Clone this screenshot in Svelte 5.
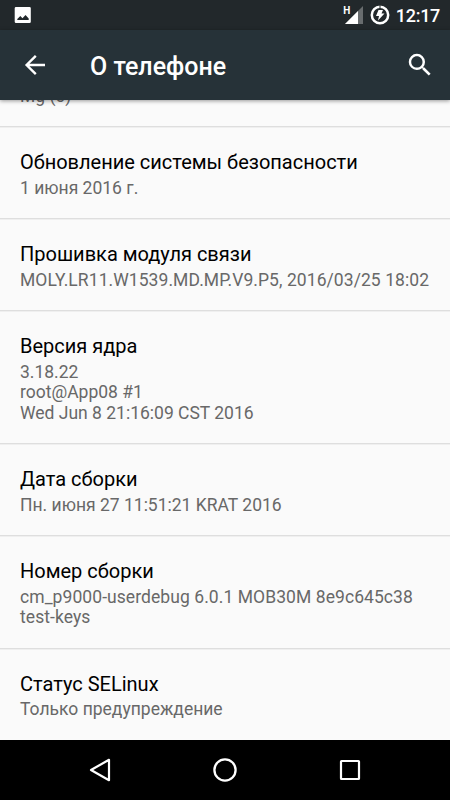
<script>
	const items = [
		{ title: 'Обновление системы безопасности', lines: ['1 июня 2016 г.'] },
		{
			title: 'Прошивка модуля связи',
			lines: ['MOLY.LR11.W1539.MD.MP.V9.P5, 2016/03/25 18:02'],
			wide: true
		},
		{
			title: 'Версия ядра',
			lines: ['3.18.22', 'root@App08 #1', 'Wed Jun 8 21:16:09 CST 2016']
		},
		{ title: 'Дата сборки', lines: ['Пн. июня 27 11:51:21 KRAT 2016'] },
		{
			title: 'Номер сборки',
			lines: ['cm_p9000-userdebug 6.0.1 MOB30M 8e9c645c38', 'test-keys'],
			wide: true
		},
		{ title: 'Статус SELinux', lines: ['Только предупреждение'] }
	];
</script>

<div class="phone">
	<div class="status-bar">
		<svg class="picture" viewBox="0 0 18 18" width="18" height="18">
			<path
				fill="#fff"
				fill-rule="evenodd"
				d="M2 1h13.500a1.300 1.300 0 0 1 1.300 1.300v13.400a1.300 1.300 0 0 1-1.300 1.300H2a1.300 1.300 0 0 1-1.300-1.300V2.300A1.300 1.300 0 0 1 2 1zM3.300 14h11.400v-1.500L11.500 9l-3 3.300L6.300 10l-3 3z"
			/>
		</svg>
		<div class="status-right">
			<span class="network">H</span>
			<svg class="signal" viewBox="0 0 18 18" width="18" height="18">
				<path fill="#686c6e" d="M18 0v18H0z" />
				<path fill="#fff" d="M13 5v13H0z" />
			</svg>
			<svg class="battery" viewBox="0 0 20 20" width="20" height="20">
				<circle cx="10" cy="10" r="8.200" fill="none" stroke="#fff" stroke-width="2.500" />
				<path stroke="#22282b" stroke-width="1" d="M10 0v3.500" />
				<path fill="#fff" d="M8.500 5h4.500l-1.500 3.500h3L8 15.500l1-4.500H6z" />
			</svg>
			<span class="clock">12:17</span>
		</div>
	</div>

	<header>
		<svg class="back" viewBox="0 0 30 30" width="30" height="30">
			<path
				fill="none"
				stroke="#fff"
				stroke-width="2.400"
				d="M25 15H7M15.800 5.800L6.600 15l9.200 9.200"
			/>
		</svg>
		<h1>О телефоне</h1>
		<svg class="search" viewBox="0 0 24 24" width="30" height="30">
			<path
				fill="#fff"
				d="M15.500 14h-.79l-.28-.27A6.471 6.471 0 0 0 16 9.500 6.500 6.500 0 1 0 9.500 16c1.610 0 3.090-.59 4.230-1.570l.27.28v.79l5 4.990L20.490 19l-4.990-5zm-6 0C7.010 14 5 11.990 5 9.500S7.010 5 9.500 5 14 7.010 14 9.500 11.990 14 9.500 14z"
			/>
		</svg>
	</header>

	<main>
		<div class="clipped"><p>Mg (0)</p></div>
		{#each items as item}
			<section>
				<h2>{item.title}</h2>
				{#each item.lines as line}
					<p class:wide={item.wide}>{line}</p>
				{/each}
			</section>
		{/each}
	</main>

	<nav>
		<svg viewBox="0 0 24 24" width="24" height="24">
			<path
				fill="none"
				stroke="#fff"
				stroke-width="2.200"
				stroke-linejoin="round"
				d="M21 1.800v20.400L3 12z"
			/>
		</svg>
		<svg viewBox="0 0 24 24" width="24" height="24">
			<circle cx="12" cy="12" r="10.600" fill="none" stroke="#fff" stroke-width="2.300" />
		</svg>
		<svg viewBox="0 0 24 24" width="24" height="24">
			<rect
				x="3"
				y="3"
				width="18"
				height="18"
				rx="0.500"
				fill="none"
				stroke="#fff"
				stroke-width="2.200"
			/>
		</svg>
	</nav>
</div>

<style>
	.phone {
		width: 450px;
		height: 800px;
		display: flex;
		flex-direction: column;
		overflow: hidden;
		background: #fafafa;
		font-family: Roboto, sans-serif;
	}

	.status-bar {
		height: 30px;
		flex: none;
		display: flex;
		align-items: center;
		justify-content: space-between;
		padding: 0 10px 0 13.500px;
		background: #22282b;
		color: #fff;
		box-sizing: border-box;
	}

	.status-right {
		display: flex;
		align-items: center;
	}

	.network {
		align-self: flex-start;
		margin-right: -5px;
		font-size: 10px;
		font-weight: 700;
		line-height: 12px;
	}

	.battery {
		margin: 0 6px 0 6.500px;
	}

	.clock {
		font-size: 18px;
		font-weight: 500;
		letter-spacing: -0.300px;
	}

	header {
		height: 70px;
		flex: none;
		display: flex;
		align-items: center;
		padding: 0 15px 0 20px;
		box-sizing: border-box;
		background: #263238;
		color: #fff;
		box-shadow: 0 1px 4px rgba(0, 0, 0, 0.4);
		z-index: 1;
	}

	h1 {
		flex: 1;
		margin: 2px 0 0 40px;
		font-size: 25px;
		font-weight: 500;
	}

	main {
		flex: 1;
		min-height: 0;
		overflow: hidden;
	}

	/* scrolled most of the way under the header */
	.clipped {
		height: 27px;
		display: flex;
		align-items: flex-end;
		padding: 0 20px 20px;
		box-sizing: border-box;
		border-bottom: 1px solid #dedede;
		box-shadow: 0 1px #efefef;
	}

	section {
		padding: 21px 20px 20px;
		border-bottom: 1px solid #dedede;
		box-shadow: 0 1px #efefef;
	}

	section:last-child {
		border-bottom: 0;
	}

	h2 {
		margin: 0;
		font-size: 20px;
		font-weight: 400;
		line-height: 29.500px;
		color: #000;
		white-space: nowrap;
	}

	p {
		margin: 0;
		font-size: 17.500px;
		line-height: 20.500px;
		color: #686868;
		white-space: nowrap;
	}

	.wide {
		letter-spacing: 0.070px;
	}

	nav {
		height: 60px;
		flex: none;
		display: flex;
		align-items: center;
		justify-content: center;
		gap: 101px;
		background: #000;
		z-index: 1;
	}
</style>
